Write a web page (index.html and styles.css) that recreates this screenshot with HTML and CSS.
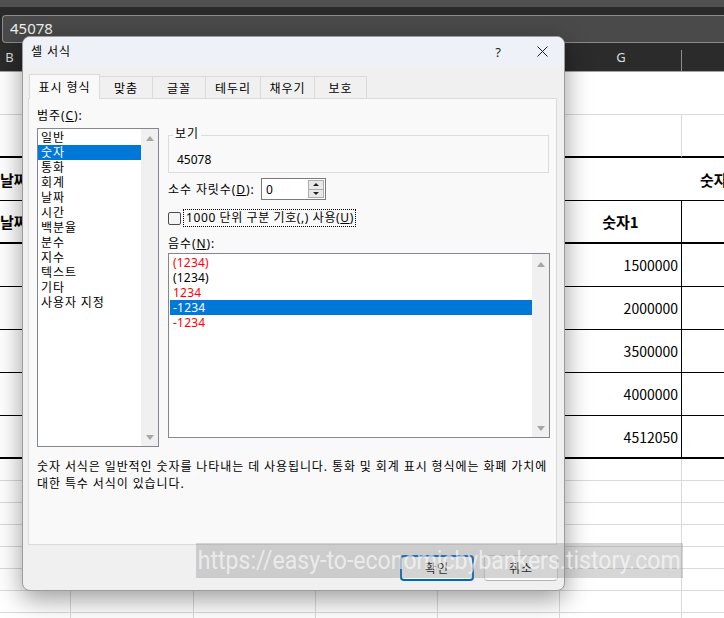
FILE: index.html
```html
<!DOCTYPE html>
<html lang="ko">
<head>
<meta charset="utf-8">
<title>셀 서식</title>
<link rel="stylesheet" href="styles.css">
</head>
<body>
<div class="app">
  <div class="ribbon"></div>
  <div class="strip"></div>
  <div class="formula-row"><div class="formula">45078</div></div>
  <div class="col-heads">
    <div class="ch">B</div>
    <div class="ch">C</div>
    <div class="ch">D</div>
    <div class="ch">E</div>
    <div class="ch">F</div>
    <div class="ch ch-sep">G</div>
    <div class="ch">H</div>
  </div>
  <div class="sheet">
    <div class="cell row1"></div>

    <div class="cell tb"></div><div class="cell tb"></div><div class="cell tb"></div><div class="cell tb"></div><div class="cell tb"></div><div class="cell tb"></div><div class="cell tb"></div>

    <div class="cell bb nr head left-pad">날짜</div><div class="cell bb nr"></div><div class="cell bb nr"></div><div class="cell bb nr"></div><div class="cell bb nr"></div><div class="cell bb nr"></div><div class="cell bb nr head h-pad">숫자</div>

    <div class="cell tb br head left-pad">날짜1</div><div class="cell tb br"></div><div class="cell tb br"></div><div class="cell tb br"></div><div class="cell tb br"></div><div class="cell tb br head center">숫자1</div><div class="cell tb br head center">숫자2</div>

    <div class="cell bb br"></div><div class="cell bb br"></div><div class="cell bb br"></div><div class="cell bb br"></div><div class="cell bb br"></div><div class="cell bb br num">1500000</div><div class="cell bb br"></div>
    <div class="cell bb br"></div><div class="cell bb br"></div><div class="cell bb br"></div><div class="cell bb br"></div><div class="cell bb br"></div><div class="cell bb br num">2000000</div><div class="cell bb br"></div>
    <div class="cell bb br"></div><div class="cell bb br"></div><div class="cell bb br"></div><div class="cell bb br"></div><div class="cell bb br"></div><div class="cell bb br num">3500000</div><div class="cell bb br"></div>
    <div class="cell bb br"></div><div class="cell bb br"></div><div class="cell bb br"></div><div class="cell bb br"></div><div class="cell bb br"></div><div class="cell bb br num">4000000</div><div class="cell bb br"></div>
    <div class="cell tb br"></div><div class="cell tb br"></div><div class="cell tb br"></div><div class="cell tb br"></div><div class="cell tb br"></div><div class="cell tb br num">4512050</div><div class="cell tb br"></div>

    <div class="cell"></div><div class="cell"></div><div class="cell"></div><div class="cell"></div><div class="cell"></div><div class="cell"></div><div class="cell"></div>
    <div class="cell"></div><div class="cell"></div><div class="cell"></div><div class="cell"></div><div class="cell"></div><div class="cell"></div><div class="cell"></div>
    <div class="cell"></div><div class="cell"></div><div class="cell"></div><div class="cell"></div><div class="cell"></div><div class="cell"></div><div class="cell"></div>
    <div class="cell"></div><div class="cell"></div><div class="cell"></div><div class="cell"></div><div class="cell"></div><div class="cell"></div><div class="cell"></div>
    <div class="cell"></div><div class="cell"></div><div class="cell"></div><div class="cell"></div><div class="cell"></div><div class="cell"></div><div class="cell"></div>
    <div class="cell"></div><div class="cell"></div><div class="cell"></div><div class="cell"></div><div class="cell"></div><div class="cell"></div><div class="cell"></div>
    <div class="cell"></div><div class="cell"></div><div class="cell"></div><div class="cell"></div><div class="cell"></div><div class="cell"></div><div class="cell"></div>
    <div class="cell"></div><div class="cell"></div><div class="cell"></div><div class="cell"></div><div class="cell"></div><div class="cell"></div><div class="cell"></div>
  </div>
</div>

<div class="dialog">
  <div class="titlebar">
    <span class="title">셀 서식</span>
    <span class="help">?</span>
    <span class="close"><svg width="11" height="11" viewBox="0 0 11 11"><path d="M0.5 0.5 L10.5 10.5 M10.5 0.5 L0.5 10.5" stroke="#1b1b1b" stroke-width="1" fill="none"/></svg></span>
  </div>
  <div class="dlg-body">
    <div class="tabs">
      <div class="tab active t1">표시 형식</div>
      <div class="tab t2">맞춤</div>
      <div class="tab t3">글꼴</div>
      <div class="tab t4">테두리</div>
      <div class="tab t5">채우기</div>
      <div class="tab t6">보호</div>
    </div>
    <div class="panel">
      <div class="panel-main">
        <div class="cat-col">
          <div class="label">범주(<u>C</u>):</div>
          <div class="listbox cat-list">
            <div class="items">
              <div class="item">일반</div>
              <div class="item sel">숫자</div>
              <div class="item">통화</div>
              <div class="item">회계</div>
              <div class="item">날짜</div>
              <div class="item">시간</div>
              <div class="item">백분율</div>
              <div class="item">분수</div>
              <div class="item">지수</div>
              <div class="item">텍스트</div>
              <div class="item">기타</div>
              <div class="item">사용자 지정</div>
            </div>
            <div class="vscroll cat-scroll"><span class="arrow up"></span><span class="arrow down"></span></div>
          </div>
        </div>
        <div class="opt-col">
          <fieldset class="sample">
            <legend>보기</legend>
            <div class="sample-val">45078</div>
          </fieldset>
          <div class="decimal-row">
            <span class="dec-label">소수 자릿수(<u>D</u>):</span>
            <div class="spin">
              <span class="spin-val">0</span>
              <div class="spin-btns">
                <span class="sb"><span class="tri tri-up"></span></span>
                <span class="sb"><span class="tri tri-down"></span></span>
              </div>
            </div>
          </div>
          <div class="check-row">
            <span class="checkbox"></span>
            <span class="check-label">1000 단위 구분 기호(,) 사용(<u>U</u>)</span>
          </div>
          <div class="label neg-label">음수(<u>N</u>):</div>
          <div class="listbox neg-list">
            <div class="items">
              <div class="item red">(1234)</div>
              <div class="item">(1234)</div>
              <div class="item red">1234</div>
              <div class="item sel">-1234</div>
              <div class="item red">-1234</div>
            </div>
            <div class="vscroll neg-scroll"><span class="arrow up"></span><span class="arrow down"></span></div>
          </div>
        </div>
      </div>
      <p class="desc">숫자 서식은 일반적인 숫자를 나타내는 데 사용됩니다. 통화 및 회계 표시 형식에는 화폐 가치에<br>대한 특수 서식이 있습니다.</p>
    </div>
    <div class="buttons">
      <button class="btn primary">확인</button>
      <button class="btn">취소</button>
    </div>
  </div>
</div>

<div class="watermark"><span class="wm-text">https://easy-to-economicbybankers.tistory.com</span></div>
</body>
</html>
```

FILE: styles.css
```css
html, body {
  margin: 0;
  padding: 0;
}
body {
  width: 724px;
  height: 618px;
  overflow: hidden;
  position: relative;
  background: #ffffff;
  font-family: "Noto Sans", "Noto Sans CJK KR", sans-serif;
}

/* ---------- spreadsheet background ---------- */
.app {
  width: 724px;
  height: 618px;
  overflow: hidden;
}
.ribbon {
  height: 7px;
  background: #505050;
}
.strip {
  height: 8px;
  background: #2a2a2a;
}
.formula-row {
  height: 28px;
  background: #2a2a2a;
  padding-left: 2px;
}
.formula {
  height: 28px;
  box-sizing: border-box;
  border: 1px solid #8b8b8b;
  border-right: none;
  border-radius: 4px 0 0 4px;
  background: #4a4a4a;
  color: #f0f0f0;
  font-family: "Noto Sans", sans-serif;
  font-size: 15px;
  line-height: 25px;
  padding-left: 7px;
}
.col-heads {
  display: grid;
  grid-template-columns: 123px 123px 122px 122px 122px 122px 122px;
  width: 856px;
  margin-left: -52px;
  height: 28px;
  background: #2b2b2b;
  border-bottom: 1px solid #a3a3a3;
  color: #dcdcdc;
  font-family: "Noto Sans", sans-serif;
  font-size: 13px;
}
.ch {
  position: relative;
  display: flex;
  align-items: center;
  justify-content: center;
}
.ch-sep::after {
  content: "";
  position: absolute;
  right: 0;
  bottom: 0;
  width: 1px;
  height: 21px;
  background: #8d8d8d;
}
.sheet {
  display: grid;
  grid-template-columns: 123px 123px 122px 122px 122px 122px 122px;
  grid-template-rows: repeat(9, 43px) repeat(8, 22px);
  width: 856px;
  margin-left: -52px;
  font-family: "Noto Sans CJK KR", sans-serif;
  font-size: 14px;
  color: #000;
}
.cell {
  box-sizing: border-box;
  border-right: 1px solid #dadada;
  border-bottom: 1px solid #dadada;
  display: flex;
  align-items: center;
  white-space: nowrap;
  overflow: hidden;
}
.row1 { grid-column: 1 / -1; border-right: none; }
.tb { border-bottom: 2px solid #000; }
.bb { border-bottom: 1px solid #000; }
.br { border-right: 1px solid #000; }
.nr { border-right: none; }
.head { font-weight: 700; font-size: 15px; }
.left-pad { padding-left: 52px; }
.h-pad { padding-left: 18px; }
.center { justify-content: center; }
.num { justify-content: flex-end; padding-right: 3px; }

/* ---------- dialog ---------- */
.dialog {
  position: absolute;
  left: 22px;
  top: 36px;
  width: 543px;
  height: 555px;
  box-sizing: border-box;
  border: 1px solid #9c9c9c;
  border-radius: 8px;
  background: #f0f0f0;
  box-shadow: 0 8px 26px rgba(0, 0, 0, 0.4);
  overflow: hidden;
  font-size: 12px;
  letter-spacing: 0.9px;
  color: #000;
}
.titlebar {
  height: 29px;
  background: #eef2f8;
  display: flex;
  align-items: center;
  padding-left: 8px;
}
.title {
  flex: 1;
  font-size: 12px;
  line-height: 15px;
}
.help {
  width: 44px;
  text-align: center;
  font-family: "Noto Sans", sans-serif;
  font-size: 13px;
  letter-spacing: 0;
  color: #1b1b1b;
}
.close {
  width: 44px;
  height: 29px;
  display: flex;
  align-items: center;
  justify-content: center;
}
.dlg-body {
  padding: 8px 7px 0 5px;
}
.tabs {
  display: flex;
  align-items: flex-end;
  height: 24px;
  padding-left: 1px;
  position: relative;
  z-index: 2;
}
.tab {
  box-sizing: border-box;
  height: 22px;
  border: 1px solid #dadada;
  border-bottom: none;
  margin-right: -1px;
  background: #f0f0f0;
  display: flex;
  align-items: center;
  justify-content: center;
  font-size: 12px;
  line-height: 15px;
  padding-top: 1px;
}
.tab.active {
  height: 25px;
  margin-bottom: -1px;
  background: #f9f9f9;
  position: relative;
  z-index: 3;
  padding-top: 0;
}
.t1 { width: 71px; }
.t2 { width: 54px; }
.t3 { width: 54px; }
.t4 { width: 56px; }
.t5 { width: 55px; }
.t6 { width: 53px; }

.panel {
  box-sizing: border-box;
  width: 529px;
  height: 447px;
  border: 1px solid #dadada;
  background: #f9f9f9;
  padding: 9px 8px 0 8px;
  position: relative;
  z-index: 1;
}
.panel-main {
  display: flex;
  align-items: flex-start;
}
.label {
  height: 15px;
  line-height: 15px;
  white-space: nowrap;
}
.cat-col {
  width: 122px;
}
.listbox {
  box-sizing: border-box;
  border: 1px solid #828790;
  background: #fff;
  display: flex;
}
.cat-list {
  margin-top: 5px;
  width: 122px;
  height: 319px;
}
.items {
  flex: 1;
  padding: 1px 0 0 0;
}
.item {
  height: 15px;
  line-height: 15px;
  padding-left: 3px;
  white-space: nowrap;
}
.item.sel {
  background: #0078d7;
  color: #fff;
}
.item.red { color: #ff0000; }
.vscroll {
  width: 17px;
  background: #f0f0f0;
  display: flex;
  flex-direction: column;
  align-items: center;
  justify-content: space-between;
  box-sizing: border-box;
}
.cat-scroll { padding: 7px 0 6px; }
.neg-scroll { padding: 8px 0 6px; }
.arrow {
  width: 0;
  height: 0;
  border-left: 4px solid transparent;
  border-right: 4px solid transparent;
}
.arrow.up { border-bottom: 5px solid #a6a6a6; }
.arrow.down { border-top: 5px solid #a6a6a6; }

.opt-col {
  width: 382px;
  margin-left: 9px;
}
.sample {
  box-sizing: border-box;
  width: 381px;
  min-width: 0;
  margin: 18px 0 0 0;
  padding: 0 7px 5px 4px;
  border: 1px solid #dcdcdc;
}
.sample legend {
  padding: 0 2px 3px 2px;
  line-height: 15px;
  font-size: 12px;
}
.sample-val {
  margin-top: 8px;
  padding-left: 4px;
  height: 15px;
  line-height: 15px;
  letter-spacing: 0;
}
.decimal-row {
  margin-top: 5px;
  height: 22px;
  display: flex;
  align-items: center;
}
.dec-label {
  width: 93px;
  white-space: nowrap;
  line-height: 15px;
}
.spin {
  box-sizing: border-box;
  width: 65px;
  height: 22px;
  border: 1px solid #7a7a7a;
  background: #fff;
  display: flex;
  align-items: center;
}
.spin-val {
  flex: 1;
  padding-left: 4px;
  line-height: 15px;
  letter-spacing: 0;
}
.spin-btns {
  width: 16px;
  height: 18px;
  display: flex;
  flex-direction: column;
  margin-right: 1px;
}
.sb {
  flex: 1;
  box-sizing: border-box;
  border: 1px solid #adadad;
  background: #e8e8e8;
  display: flex;
  align-items: center;
  justify-content: center;
}
.sb + .sb { border-top: none; }
.tri {
  width: 0;
  height: 0;
  border-left: 3px solid transparent;
  border-right: 3px solid transparent;
}
.tri-up { border-bottom: 3px solid #202020; }
.tri-down { border-top: 3px solid #202020; }

.check-row {
  margin-top: 9px;
  height: 18px;
  display: flex;
  align-items: center;
}
.checkbox {
  box-sizing: border-box;
  width: 13px;
  height: 13px;
  border: 1px solid #4b4b4b;
  border-radius: 2px;
  background: #f4f4f4;
}
.check-label {
  box-sizing: border-box;
  height: 18px;
  margin-left: 2px;
  padding: 0 1px 0 2px;
  border: 1px dotted #000;
  line-height: 16px;
  white-space: nowrap;
  letter-spacing: 0.6px;
}
.neg-label {
  margin-top: 9px;
}
.neg-list {
  margin-top: 2px;
  width: 382px;
  height: 185px;
}
.neg-list .items {
  padding: 1px 0 0 1px;
}
.neg-list .item {
  letter-spacing: 0.2px;
}
.desc {
  margin: 11px 0 0 0;
  line-height: 17px;
  white-space: nowrap;
}
.buttons {
  display: flex;
  justify-content: flex-end;
  gap: 10px;
  margin-top: 10px;
  margin-right: -1px;
}
.btn {
  box-sizing: border-box;
  width: 74px;
  height: 26px;
  border: 1px solid #d0d0d0;
  border-bottom-color: #b4b4b4;
  border-radius: 4px;
  background: #fdfdfd;
  font-family: "Noto Sans", "Noto Sans CJK KR", sans-serif;
  font-size: 12px;
  letter-spacing: 0.9px;
  color: #000;
  padding: 0;
}
.btn.primary {
  border: 2px solid #0067c0;
}

/* ---------- watermark overlay ---------- */
.watermark {
  position: absolute;
  left: 196px;
  top: 543px;
  width: 487px;
  height: 35px;
  background: rgba(128, 128, 128, 0.32);
  z-index: 10;
  overflow: hidden;
  white-space: nowrap;
}
.wm-text {
  display: inline-block;
  font-family: Roboto, "Liberation Sans", sans-serif;
  font-size: 25px;
  line-height: 35px;
  color: rgba(255, 255, 255, 0.62);
  transform-origin: 0 50%;
  transform: scaleX(0.922);
  padding-left: 2px;
}
```
